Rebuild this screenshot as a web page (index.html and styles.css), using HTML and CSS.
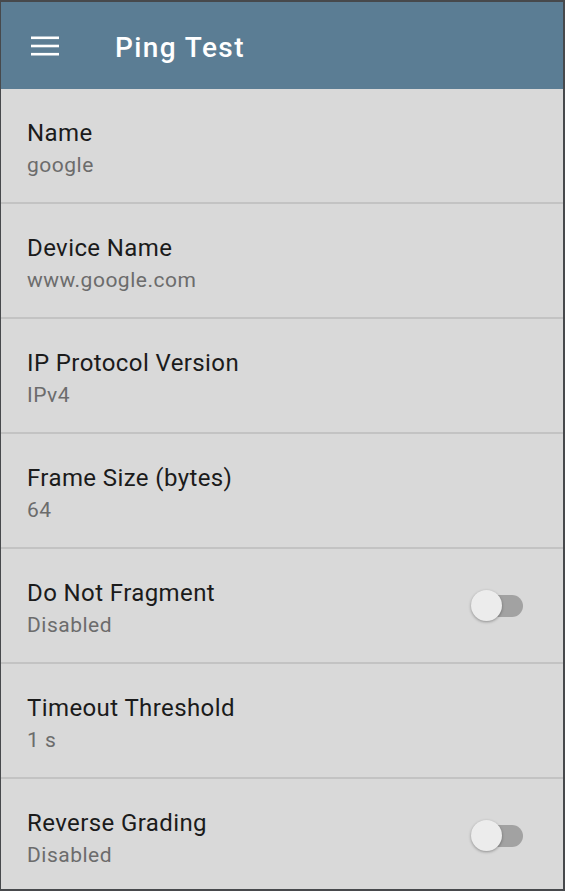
FILE: index.html
```html
<!DOCTYPE html>
<html>
<head>
<meta charset="utf-8">
<link rel="stylesheet" href="styles.css">
</head>
<body>
<div class="screen">
  <header class="appbar">
    <svg class="menu" width="28" height="20" viewBox="0 0 28 20"><rect x="0" y="0.5" width="28" height="2.6" fill="#fff"/><rect x="0" y="8.7" width="28" height="2.6" fill="#fff"/><rect x="0" y="16.9" width="28" height="2.6" fill="#fff"/></svg>
    <h1 class="title">Ping Test</h1>
  </header>
  <div class="list">
    <div class="row"><div class="text"><div class="label">Name</div><div class="value">google</div></div></div>
    <div class="row"><div class="text"><div class="label">Device Name</div><div class="value">www.google.com</div></div></div>
    <div class="row"><div class="text"><div class="label">IP Protocol Version</div><div class="value">IPv4</div></div></div>
    <div class="row"><div class="text"><div class="label">Frame Size (bytes)</div><div class="value">64</div></div></div>
    <div class="row"><div class="text"><div class="label">Do Not Fragment</div><div class="value">Disabled</div></div><div class="switch"><span class="track"></span><span class="thumb"></span></div></div>
    <div class="row"><div class="text"><div class="label">Timeout Threshold</div><div class="value">1 s</div></div></div>
    <div class="row"><div class="text"><div class="label">Reverse Grading</div><div class="value">Disabled</div></div><div class="switch"><span class="track"></span><span class="thumb"></span></div></div>
  </div>
</div>
</body>
</html>
```
FILE: styles.css
```css
html, body { margin: 0; padding: 0; background: #47494c; }
.screen {
  width: 565px; height: 891px; box-sizing: border-box;
  border-style: solid; border-color: #47494c;
  border-width: 2px 2px 2px 1px;
  background: #d9d9d9; overflow: hidden;
  font-family: Roboto, "Noto Sans", sans-serif;
}
.appbar {
  height: 87px; background: #5b7d94;
  display: flex; align-items: center;
}
.menu { margin-left: 30px; display: block; }
.title {
  margin: 4px 0 0 56px; color: #fff; font-size: 28px; font-weight: 500;
  letter-spacing: 1.4px;
}
.list { display: flex; flex-direction: column; }
.row {
  height: 115px; box-sizing: border-box;
  border-bottom: 2px solid #c3c3c3;
  display: flex; align-items: center; justify-content: space-between;
  padding: 0 40px 0 26px;
}
.text { display: flex; flex-direction: column; gap: 4px; margin-top: 5px; }
.label { font-size: 24px; line-height: 30px; color: #1b1b1b; letter-spacing: 0.4px; }
.value { font-size: 21px; line-height: 27px; color: #6c6c6c; letter-spacing: 0.5px; }
.switch { position: relative; width: 52px; height: 32px; }
.track {
  position: absolute; left: 6px; right: 0; top: 5px; height: 22px;
  border-radius: 11px; background: #a2a2a2;
}
.thumb {
  position: absolute; left: 0; top: 0; width: 31px; height: 31px;
  border-radius: 50%; background: #ececec;
  box-shadow: 0 1px 3px rgba(0,0,0,0.35);
}
```
